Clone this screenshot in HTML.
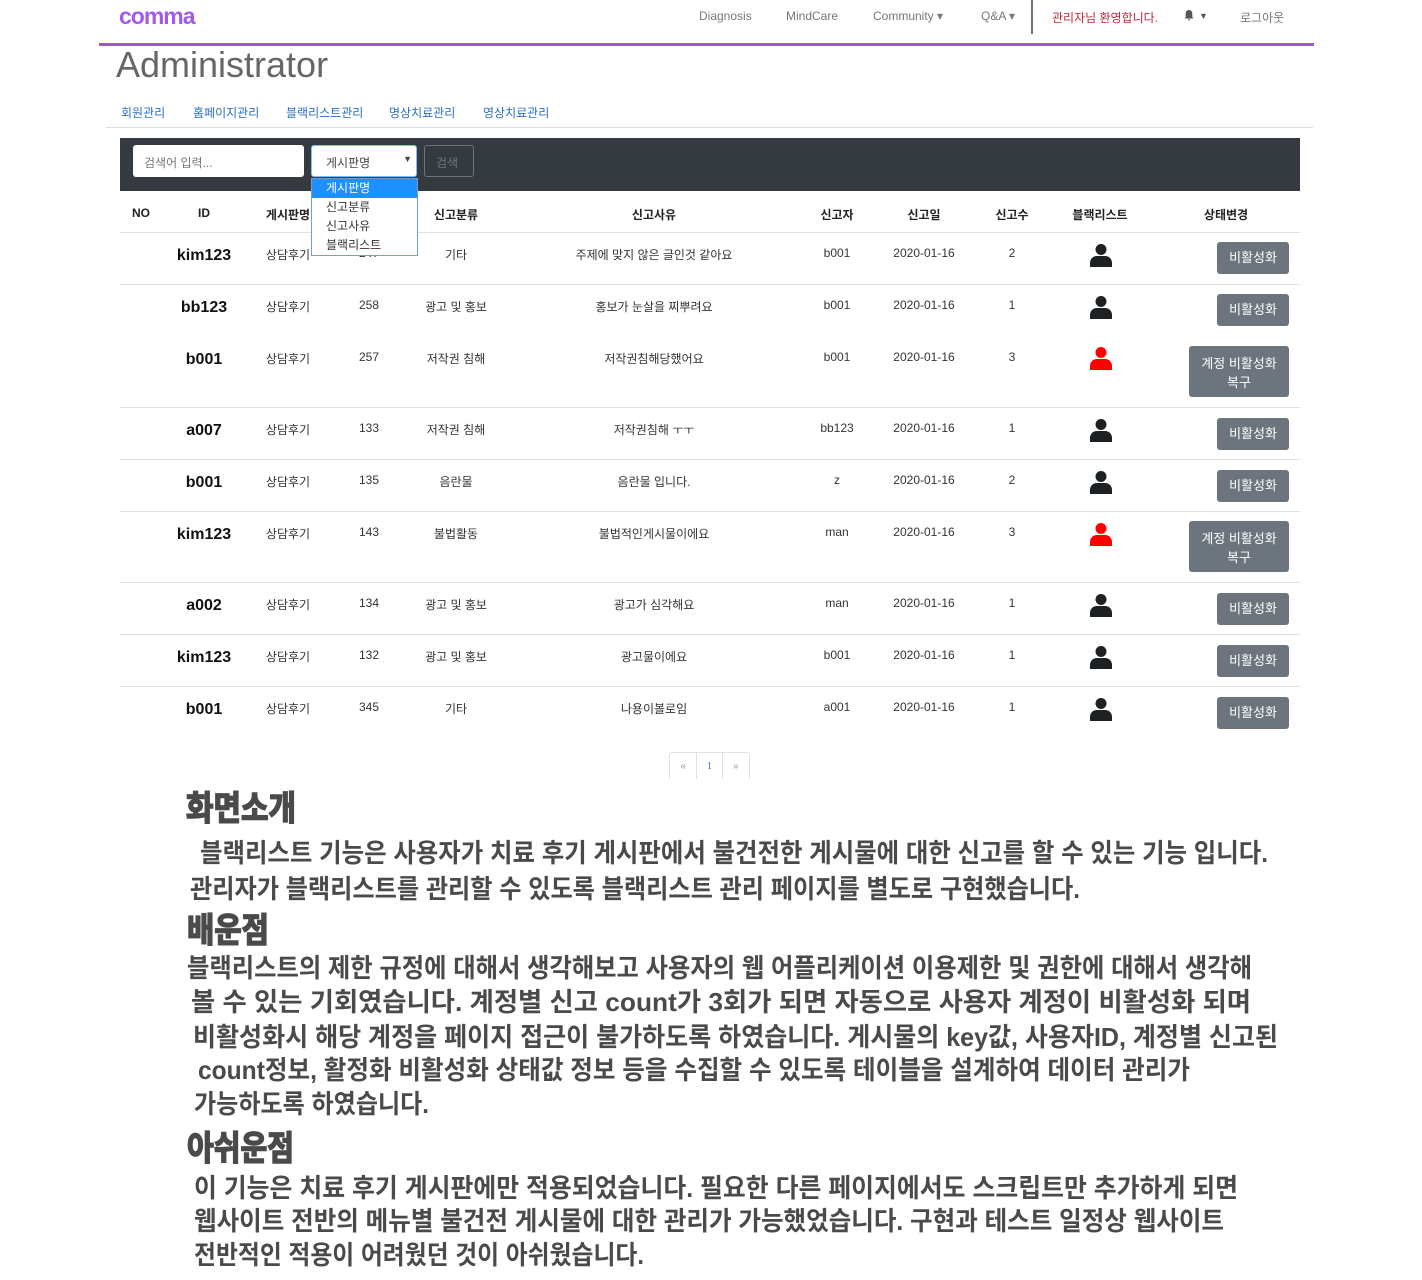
<!DOCTYPE html>
<html><head><meta charset="utf-8"><style>
*{margin:0;padding:0;box-sizing:border-box}
body{width:1422px;height:1280px;background:#fff;position:relative;font-family:"Liberation Sans","Noto Sans CJK KR",sans-serif;overflow:hidden}
.a{position:absolute;white-space:nowrap}
.nav{font-size:12px;color:#777;top:9px}
.sub{font-size:12px;color:#2a6fc0;top:104px}
.hd{font-size:12px;font-weight:bold;color:#222;top:206px;transform:translateX(-50%)}
.c{font-size:12px;color:#333;transform:translateX(-50%)}
.id{font-size:16px;font-weight:bold;color:#111;transform:translateX(-50%);margin-top:2px}
.line{position:absolute;left:120px;width:1180px;height:1px;background:#dee2e6}
.btn{position:absolute;background:#6c757d;color:#fff;font-size:13px;border-radius:3px;text-align:center;right:133px}
.usr{position:absolute;left:1089px;width:24px;height:24px}
</style></head><body>
<div class="a" style="left:119px;top:3px;font-size:23px;color:#a05ce8;letter-spacing:-1px;font-weight:bold">comma</div>
<div class="a nav" style="left:699px">Diagnosis</div>
<div class="a nav" style="left:786px">MindCare</div>
<div class="a nav" style="left:873px">Community ▾</div>
<div class="a nav" style="left:981px">Q&amp;A ▾</div>
<div class="a" style="left:1031px;top:0;width:2px;height:34px;background:#777"></div>
<div class="a nav" style="left:1052px;color:#c0283a">관리자님 환영합니다.</div>
<svg class="a" style="left:1183px;top:9px" width="12" height="12" viewBox="0 0 12 12" fill="#555"><path d="M6 1c-2 0-3.3 1.5-3.3 3.5V8L1.5 9.5h9L9.3 8V4.5C9.3 2.5 8 1 6 1zM4.8 10.3a1.2 1.2 0 0 0 2.4 0z"/></svg>
<div class="a nav" style="left:1199px;color:#555;font-size:9px;top:11px">▼</div>
<div class="a nav" style="left:1240px">로그아웃</div>
<div class="a" style="left:99px;top:43px;width:1215px;height:3px;background:#9b59d9"></div>
<div class="a" style="left:116px;top:44px;font-size:36px;color:#666">Administrator</div>
<div class="a sub" style="left:121px">회원관리</div>
<div class="a sub" style="left:193px">홈페이지관리</div>
<div class="a sub" style="left:286px">블랙리스트관리</div>
<div class="a sub" style="left:389px">명상치료관리</div>
<div class="a sub" style="left:483px">영상치료관리</div>
<div class="a" style="left:106px;top:127px;width:1207px;height:1px;background:#ddd"></div>
<div class="a" style="left:120px;top:138px;width:1180px;height:53px;background:#343a40"></div>
<div class="a" style="left:133px;top:145px;width:171px;height:32px;background:#fff;border-radius:3px;font-size:12px;color:#777;padding:9px 11px">검색어 입력...</div>
<div class="a" style="left:311px;top:145px;width:106px;height:32px;background:#fff;border-radius:3px;border:1px solid #80bdff;font-size:12px;color:#444;padding:8px 14px">게시판명<span style="position:absolute;right:4px;top:8px;font-size:9px">▼</span></div>
<div class="a" style="left:424px;top:145px;width:50px;height:32px;border:1px solid #6c757d;border-radius:3px;font-size:12px;color:#6c757d;padding:8px 11px">검색</div>

<div class="a hd" style="left:141px">NO</div>
<div class="a hd" style="left:204px">ID</div>
<div class="a hd" style="left:288px">게시판명</div>
<div class="a hd" style="left:456px">신고분류</div>
<div class="a hd" style="left:654px">신고사유</div>
<div class="a hd" style="left:837px">신고자</div>
<div class="a hd" style="left:924px">신고일</div>
<div class="a hd" style="left:1012px">신고수</div>
<div class="a hd" style="left:1100px">블랙리스트</div>
<div class="a hd" style="left:1226px">상태변경</div>

<div class="line" style="top:232px"></div><div class="line" style="top:284px"></div>
<div class="line" style="top:407px"></div><div class="line" style="top:459px"></div>
<div class="line" style="top:511px"></div><div class="line" style="top:582px"></div>
<div class="line" style="top:634px"></div><div class="line" style="top:686px"></div>

<svg width="0" height="0" style="position:absolute"><defs><symbol id="u" viewBox="0 0 24 24"><circle cx="12" cy="6.5" r="5.5"/><path d="M1 24v-4c0-4 3-7 7-7h8c4 0 7 3 7 7v4z"/></symbol></defs></svg>

<div class="a id" style="left:204px;top:245px">kim123</div><div class="a c" style="left:288px;top:246px">상담후기</div><div class="a c" style="left:369px;top:246px">247</div><div class="a c" style="left:456px;top:246px">기타</div><div class="a c" style="left:654px;top:246px">주제에 맞지 않은 글인것 같아요</div><div class="a c" style="left:837px;top:246px">b001</div><div class="a c" style="left:924px;top:246px">2020-01-16</div><div class="a c" style="left:1012px;top:246px">2</div><svg class="usr" style="top:243px;fill:#1d2124"><use href="#u"/></svg><div class="btn" style="top:242px;width:72px;height:32px;line-height:32px">비활성화</div>

<div class="a id" style="left:204px;top:297px">bb123</div><div class="a c" style="left:288px;top:298px">상담후기</div><div class="a c" style="left:369px;top:298px">258</div><div class="a c" style="left:456px;top:298px">광고 및 홍보</div><div class="a c" style="left:654px;top:298px">홍보가 눈살을 찌뿌려요</div><div class="a c" style="left:837px;top:298px">b001</div><div class="a c" style="left:924px;top:298px">2020-01-16</div><div class="a c" style="left:1012px;top:298px">1</div><svg class="usr" style="top:295px;fill:#1d2124"><use href="#u"/></svg><div class="btn" style="top:294px;width:72px;height:32px;line-height:32px">비활성화</div>

<div class="a id" style="left:204px;top:349px">b001</div><div class="a c" style="left:288px;top:350px">상담후기</div><div class="a c" style="left:369px;top:350px">257</div><div class="a c" style="left:456px;top:350px">저작권 침해</div><div class="a c" style="left:654px;top:350px">저작권침해당했어요</div><div class="a c" style="left:837px;top:350px">b001</div><div class="a c" style="left:924px;top:350px">2020-01-16</div><div class="a c" style="left:1012px;top:350px">3</div><svg class="usr" style="top:346px;fill:#f00"><use href="#u"/></svg><div class="btn" style="top:346px;width:100px;height:51px;padding-top:8px;line-height:19px">계정 비활성화<br>복구</div>

<div class="a id" style="left:204px;top:420px">a007</div><div class="a c" style="left:288px;top:421px">상담후기</div><div class="a c" style="left:369px;top:421px">133</div><div class="a c" style="left:456px;top:421px">저작권 침해</div><div class="a c" style="left:654px;top:421px">저작권침해 ㅜㅜ</div><div class="a c" style="left:837px;top:421px">bb123</div><div class="a c" style="left:924px;top:421px">2020-01-16</div><div class="a c" style="left:1012px;top:421px">1</div><svg class="usr" style="top:418px;fill:#1d2124"><use href="#u"/></svg><div class="btn" style="top:418px;width:72px;height:32px;line-height:32px">비활성화</div>

<div class="a id" style="left:204px;top:472px">b001</div><div class="a c" style="left:288px;top:473px">상담후기</div><div class="a c" style="left:369px;top:473px">135</div><div class="a c" style="left:456px;top:473px">음란물</div><div class="a c" style="left:654px;top:473px">음란물 입니다.</div><div class="a c" style="left:837px;top:473px">z</div><div class="a c" style="left:924px;top:473px">2020-01-16</div><div class="a c" style="left:1012px;top:473px">2</div><svg class="usr" style="top:470px;fill:#1d2124"><use href="#u"/></svg><div class="btn" style="top:470px;width:72px;height:32px;line-height:32px">비활성화</div>

<div class="a id" style="left:204px;top:524px">kim123</div><div class="a c" style="left:288px;top:525px">상담후기</div><div class="a c" style="left:369px;top:525px">143</div><div class="a c" style="left:456px;top:525px">불법활동</div><div class="a c" style="left:654px;top:525px">불법적인게시물이에요</div><div class="a c" style="left:837px;top:525px">man</div><div class="a c" style="left:924px;top:525px">2020-01-16</div><div class="a c" style="left:1012px;top:525px">3</div><svg class="usr" style="top:522px;fill:#f00"><use href="#u"/></svg><div class="btn" style="top:521px;width:100px;height:51px;padding-top:8px;line-height:19px">계정 비활성화<br>복구</div>

<div class="a id" style="left:204px;top:595px">a002</div><div class="a c" style="left:288px;top:596px">상담후기</div><div class="a c" style="left:369px;top:596px">134</div><div class="a c" style="left:456px;top:596px">광고 및 홍보</div><div class="a c" style="left:654px;top:596px">광고가 심각해요</div><div class="a c" style="left:837px;top:596px">man</div><div class="a c" style="left:924px;top:596px">2020-01-16</div><div class="a c" style="left:1012px;top:596px">1</div><svg class="usr" style="top:593px;fill:#1d2124"><use href="#u"/></svg><div class="btn" style="top:593px;width:72px;height:32px;line-height:32px">비활성화</div>

<div class="a id" style="left:204px;top:647px">kim123</div><div class="a c" style="left:288px;top:648px">상담후기</div><div class="a c" style="left:369px;top:648px">132</div><div class="a c" style="left:456px;top:648px">광고 및 홍보</div><div class="a c" style="left:654px;top:648px">광고물이에요</div><div class="a c" style="left:837px;top:648px">b001</div><div class="a c" style="left:924px;top:648px">2020-01-16</div><div class="a c" style="left:1012px;top:648px">1</div><svg class="usr" style="top:645px;fill:#1d2124"><use href="#u"/></svg><div class="btn" style="top:645px;width:72px;height:32px;line-height:32px">비활성화</div>

<div class="a id" style="left:204px;top:699px">b001</div><div class="a c" style="left:288px;top:700px">상담후기</div><div class="a c" style="left:369px;top:700px">345</div><div class="a c" style="left:456px;top:700px">기타</div><div class="a c" style="left:654px;top:700px">나용이볼로임</div><div class="a c" style="left:837px;top:700px">a001</div><div class="a c" style="left:924px;top:700px">2020-01-16</div><div class="a c" style="left:1012px;top:700px">1</div><svg class="usr" style="top:697px;fill:#1d2124"><use href="#u"/></svg><div class="btn" style="top:697px;width:72px;height:32px;line-height:32px">비활성화</div>

<div class="a" style="left:311px;top:178px;width:107px;height:78px;background:#fff;border:1px solid #7a9cc6;font-size:12px;color:#333;line-height:19px">
<div style="background:#1e90ff;color:#fff;padding-left:14px">게시판명</div>
<div style="padding-left:14px">신고분류</div>
<div style="padding-left:14px">신고사유</div>
<div style="padding-left:14px">블랙리스트</div></div>

<div class="a" style="left:669px;top:752px;width:81px;height:27px;border:1px solid #dee2e6;border-bottom:none;border-radius:3px 3px 0 0;font-size:10px;display:flex">
<div style="width:27px;text-align:center;line-height:27px;color:#999">«</div>
<div style="width:27px;text-align:center;line-height:27px;color:#2a6fc0;border-left:1px solid #dee2e6;border-right:1px solid #dee2e6;font-family:'Liberation Serif',serif">1</div>
<div style="width:27px;text-align:center;line-height:27px;color:#999">»</div></div>

<svg class="a" style="left:0;top:0" width="1422" height="1280" font-family="Liberation Sans, Noto Sans CJK KR, sans-serif" font-weight="bold" fill="#4a4a4a">
<g font-size="34" stroke="#4a4a4a" stroke-width="1.6">
<text x="186" y="820" textLength="110" lengthAdjust="spacingAndGlyphs">화면소개</text>
<text x="187" y="942" textLength="82" lengthAdjust="spacingAndGlyphs">배운점</text>
<text x="187" y="1160" textLength="107" lengthAdjust="spacingAndGlyphs">아쉬운점</text>
</g>
<g font-size="26">
<text x="200" y="862" textLength="1068" lengthAdjust="spacingAndGlyphs">블랙리스트 기능은 사용자가 치료 후기 게시판에서 불건전한 게시물에 대한 신고를 할 수 있는 기능 입니다.</text>
<text x="190" y="898" textLength="890" lengthAdjust="spacingAndGlyphs">관리자가 블랙리스트를 관리할 수 있도록 블랙리스트 관리 페이지를 별도로 구현했습니다.</text>
<text x="187" y="977" textLength="1065" lengthAdjust="spacingAndGlyphs">블랙리스트의 제한 규정에 대해서 생각해보고 사용자의 웹 어플리케이션 이용제한 및 권한에 대해서 생각해</text>
<text x="191" y="1011" textLength="1060" lengthAdjust="spacingAndGlyphs">볼 수 있는 기회였습니다. 계정별 신고 count가 3회가 되면 자동으로 사용자 계정이 비활성화 되며</text>
<text x="193" y="1046" textLength="1085" lengthAdjust="spacingAndGlyphs">비활성화시 해당 계정을 페이지 접근이 불가하도록 하였습니다. 게시물의 key값, 사용자ID, 계정별 신고된</text>
<text x="198" y="1079" textLength="992" lengthAdjust="spacingAndGlyphs">count정보, 활정화 비활성화 상태값 정보 등을 수집할 수 있도록 테이블을 설계하여 데이터 관리가</text>
<text x="194" y="1113" textLength="235" lengthAdjust="spacingAndGlyphs">가능하도록 하였습니다.</text>
<text x="194" y="1197" textLength="1044" lengthAdjust="spacingAndGlyphs">이 기능은 치료 후기 게시판에만 적용되었습니다. 필요한 다른 페이지에서도 스크립트만 추가하게 되면</text>
<text x="194" y="1230" textLength="1030" lengthAdjust="spacingAndGlyphs">웹사이트 전반의 메뉴별 불건전 게시물에 대한 관리가 가능했었습니다. 구현과 테스트 일정상 웹사이트</text>
<text x="194" y="1264" textLength="450" lengthAdjust="spacingAndGlyphs">전반적인 적용이 어려웠던 것이 아쉬웠습니다.</text>
</g></svg>
</body></html>
